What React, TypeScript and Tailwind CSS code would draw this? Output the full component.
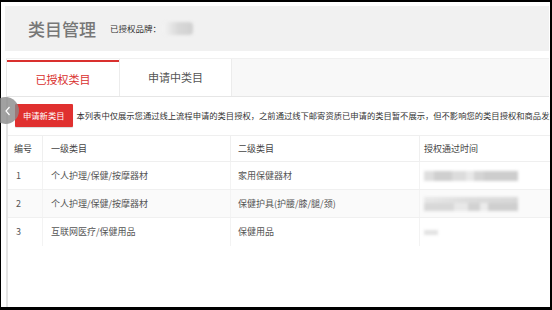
import React from "react";

const font = { fontFamily: '"Noto Sans CJK SC", "Noto Sans", sans-serif' };

function Blur({ className }: { className: string }) {
  return <div className={"blur-[1.5px] " + className} />;
}

export default function App() {
  const rows = [
    { no: "1", c1: "个人护理/保健/按摩器材", c2: "家用保健器材", t: 1 },
    { no: "2", c1: "个人护理/保健/按摩器材", c2: "保健护具(护腰/膝/腿/颈)", t: 2 },
    { no: "3", c1: "互联网医疗/保健用品", c2: "保健用品", t: 3 },
  ];
  return (
    <div
      className="w-[552px] h-[310px] bg-black pt-[2px] pl-[1px] pr-[2px] pb-[3px] relative overflow-hidden"
      style={font}
    >
      <div className="bg-white w-full h-full flex flex-col relative overflow-hidden">
        {/* header */}
        <div className="mt-[4px] ml-[4px] mr-[1px] h-[45px] bg-[#f1f1f1] flex items-center pl-[23px] shrink-0">
          <span className="text-[17px] leading-none text-[#777] font-medium">类目管理</span>
          <span className="ml-[14px] text-[8.5px] text-[#333] leading-none">已授权品牌：</span>
          <Blur className="ml-[2px] w-[30px] h-[13px] rounded-[4px] bg-gradient-to-r from-[#f4f4f4] via-[#d8d8d8] to-[#d0d0d0]" />
        </div>
        {/* tabs */}
        <div className="mt-[7px] ml-[5px] mr-[1px] h-[39px] bg-[#f8f8f8] border-t border-[#f0f0f0] border-b border-b-[#e6e6e6] flex shrink-0">
          <div className="w-[113px] bg-white border-l border-[#e8e8e8] flex flex-col">
            <div className="h-[2px] mt-[1px] bg-[#d9302e]" />
            <div className="flex-1 flex items-center justify-center text-[11px] text-[#d9302e]">已授权类目</div>
          </div>
          <div className="w-[113px] bg-white border-l border-r border-[#ececec] flex items-center justify-center text-[11px] text-[#555]">
            申请中类目
          </div>
        </div>
        {/* content */}
        <div className="ml-[5px] flex-1 border-l-2 border-[#e4e4e4] flex flex-col min-w-0">
          <div className="flex items-center pl-[7px] mt-[7px] h-[23px]">
            <div className="shrink-0 whitespace-nowrap h-[23px] px-[8px] bg-[#e0302f] text-white text-[8.3px] flex items-center rounded-[1px] shadow-[0_1px_1px_rgba(0,0,0,0.15)]">
              申请新类目
            </div>
            <div className="shrink-0 ml-[4px] text-[8.3px] text-[#333] whitespace-nowrap leading-none">
              本列表中仅展示您通过线上流程申请的类目授权，之前通过线下邮寄资质已申请的类目暂不展示，但不影响您的类目授权和商品发布
            </div>
          </div>
          <div className="mt-[8px] text-[9px] text-[#555] w-[560px]">
            <div className="flex h-[27px] border-t border-b border-[#efefef] items-center text-[#444]">
              <div className="w-[35px] pl-[6px] h-full flex items-center border-r border-[#efefef]">编号</div>
              <div className="w-[188px] pl-[8px] h-full flex items-center border-r border-[#efefef]">一级类目</div>
              <div className="w-[189px] pl-[7px] h-full flex items-center border-r border-[#efefef]">二级类目</div>
              <div className="flex-1 pl-[4px] h-full flex items-center">授权通过时间</div>
            </div>
            {rows.map((r, i) => (
              <div
                key={r.no}
                className={
                  "flex h-[28px] items-center " +
                  (i === 1 ? "bg-[#fafafa] " : "bg-white ") +
                  (i < 2 ? "border-b border-[#f0f0f0]" : "")
                }
              >
                <div className="w-[35px] pl-[8px] h-full flex items-center border-r border-[#f3f3f3]">{r.no}</div>
                <div className="w-[188px] pl-[8px] h-full flex items-center border-r border-[#f3f3f3]">{r.c1}</div>
                <div className="w-[189px] pl-[7px] h-full flex items-center border-r border-[#f3f3f3]">{r.c2}</div>
                <div className="flex-1 pl-[4px] h-full flex items-center">
                  {r.t === 1 && (
                    <div className="flex h-[10px] w-[94px] blur-[1.5px]">
                      <div className="w-[10px] bg-[#dedede]" />
                      <div className="w-[18px] bg-[#cfcfcf]" />
                      <div className="w-[14px] bg-[#dcdcdc]" />
                      <div className="w-[8px] bg-[#e8e8e8]" />
                      <div className="w-[10px] bg-[#d4d4d4]" />
                      <div className="flex-1 bg-[#cdcdcd]" />
                    </div>
                  )}
                  {r.t === 2 && (
                    <div className="flex flex-col w-[94px] blur-[1.5px]">
                      <div className="h-[6px] bg-gradient-to-r from-[#e8e8e8] via-[#dcdcdc] to-[#d8d8d8]" />
                      <div className="h-[8px] flex">
                        <div className="w-[30px] bg-[#d8d8d8]" />
                        <div className="w-[14px] bg-[#e8e8e8]" />
                        <div className="w-[12px] bg-[#d2d2d2]" />
                        <div className="w-[8px] bg-[#ececec]" />
                        <div className="flex-1 bg-[#cfcfcf]" />
                      </div>
                    </div>
                  )}
                  {r.t === 3 && <Blur className="w-[14px] h-[5px] bg-[#e2e2e2]" />}
                </div>
              </div>
            ))}
          </div>
        </div>
      </div>
      {/* side circle */}
      <div className="absolute left-[-8px] top-[97px] w-[27px] h-[27px] rounded-full bg-[#8a8a8a]/80 flex items-center justify-center">
        <svg width="10" height="12" viewBox="0 0 10 12" className="ml-[5px]">
          <path d="M6.5 2 L3 6 L6.5 10" stroke="white" strokeWidth="1.2" fill="none" />
        </svg>
      </div>
    </div>
  );
}
